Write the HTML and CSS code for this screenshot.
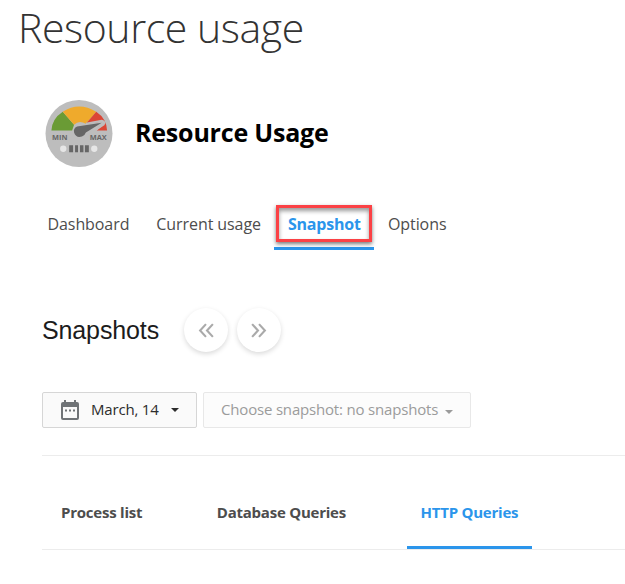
FILE: index.html
```html
<!DOCTYPE html>
<html lang="en">
<head>
<meta charset="utf-8">
<title>Resource usage</title>
<link rel="stylesheet" href="styles.css">
</head>
<body>
<h1 class="page-title">Resource usage</h1>
<main class="content">
  <header class="plugin-header">
    <svg class="gauge" viewBox="0 0 68 68">
      <circle cx="34" cy="34" r="34" fill="#bdbdbd"/>
      <path d="M6 31A28.500 25 0 0 1 17.500 12L29 25Q28 28 27 31Z" fill="#6a9b35"/>
      <path d="M17.500 12Q34 1 51.500 12L41 24Q34 20 29 25Z" fill="#efaa2c"/>
      <path d="M51.500 12Q62 19 62.500 31H52L60 24Q60 20 56 22L41 24Z" fill="#db4635"/>
      <path d="M41 24L57 21Q61 22 59 25L50 31" fill="none" stroke="#bdbdbd" stroke-width="2"/>
      <path d="M57 23.200L32 27Q28 29 29 33Q31 39 37 37Q40 36 41 33Z" fill="#666"/>
      <text class="gauge-label" x="14.500" y="41">MIN</text>
      <text class="gauge-label" x="53.500" y="41">MAX</text>
      <circle cx="18" cy="49.500" r="3.200" fill="#e6e6e6"/>
      <circle cx="49.500" cy="49.500" r="3.200" fill="#e6e6e6"/>
      <path d="M24 46h4v7h-4zM30 46h3v7h-3zM35 46h3.500v7H35zM40 46h4v7h-4z" fill="#666"/>
    </svg>
    <h2 class="plugin-name">Resource Usage</h2>
  </header>
  <nav class="tabs">
    <a class="tab">Dashboard</a>
    <a class="tab">Current usage</a>
    <a class="tab active">Snapshot<span class="highlight"></span></a>
    <a class="tab">Options</a>
  </nav>
  <section class="snapshots">
    <h3 class="section-title">Snapshots</h3>
    <button class="round"><svg viewBox="0 0 16 16"><path d="M7.500 2L2 8l5.500 6M14 2L8.500 8l5.500 6"/></svg></button>
    <button class="round"><svg viewBox="0 0 16 16"><path d="M2 2l5.500 6L2 14M8.500 2L14 8l-5.500 6"/></svg></button>
  </section>
  <div class="filters">
    <button class="select date"><svg class="calendar" viewBox="0 0 18 20"><path fill-rule="evenodd" d="M2 2h1V0h2v2h8V0h2v2h1q2 0 2 2v14q0 2-2 2H2q-2 0-2-2V4q0-2 2-2zM2 7v11h14V7z"/><path d="M4 9.500h2v2H4zM8 9.500h2v2H8zM12 9.500h2v2h-2z"/></svg><span class="date-text">March, 14</span><i class="caret"></i></button>
    <button class="select choose"><span class="choose-text">Choose snapshot: no snapshots</span><i class="caret"></i></button>
  </div>
  <nav class="subtabs">
    <a class="subtab">Process list</a>
    <a class="subtab">Database Queries</a>
    <a class="subtab active">HTTP Queries</a>
  </nav>
</main>
</body>
</html>
```
FILE: styles.css
```css
* { box-sizing: border-box; }
body { margin: 0; background: #fff; color: #4d4d4d; font-family: "Open Sans", sans-serif; overflow: hidden; }
h1, h2, h3 { margin: 0; }
button { padding: 0; font: inherit; }
.page-title { padding-left: 18px; height: 99px; font-size: 41px; line-height: 55px; letter-spacing: -.42px; font-weight: 300; color: #333; white-space: nowrap; }
.content { padding-left: 42px; }
.plugin-header { display: flex; align-items: center; height: 69px; padding-left: 3px; gap: 22px; }
.gauge { width: 68px; height: 67px; margin-bottom: 1px; }
.gauge-label { font: bold 7.500px "Open Sans", sans-serif; fill: #666; text-anchor: middle; }
.plugin-name { margin-bottom: 4px; font-size: 25px; line-height: 34px; letter-spacing: -.2px; font-weight: 700; color: #000; }
.tabs { display: flex; margin: 31px 0 0 -8px; height: 51px; font-size: 16px; line-height: 50px; letter-spacing: -.08px; }
.tab { position: relative; padding: 0 13.500px; white-space: nowrap; }
.tab.active { width: 100px; font-weight: 700; letter-spacing: -.22px; color: #2b95eb; border-bottom: 3px solid #2b95eb; }
.highlight { position: absolute; left: 2px; top: 6px; width: 96px; height: 37px; border: 3px solid #fb4145; box-shadow: 0 2px 4px #0008, inset 0 3px 4px #0006; }
.snapshots { display: flex; align-items: center; height: 44px; margin-top: 58px; }
.section-title { width: 142px; font: 25px "Liberation Sans", sans-serif; letter-spacing: -.12px; color: #1c1c1c; }
.round { display: flex; align-items: center; justify-content: center; width: 44px; height: 44px; margin-right: 8.500px; border: 0; border-radius: 50%; background: #fff; box-shadow: 0 2px 5px #00000026; }
.round svg { width: 17px; height: 17px; fill: none; stroke: #aaa; stroke-width: 2; }
.filters { display: flex; gap: 6px; margin-top: 40px; }
.select { display: flex; align-items: center; height: 36px; border: 1px solid #d6d6d6; border-radius: 2px; background: #fafafa; font-size: 15px; letter-spacing: -.18px; white-space: nowrap; }
.date { width: 155px; padding-left: 18px; color: #2c2c2c; }
.calendar { width: 18px; height: 20px; margin-bottom: 1px; fill: #707477; }
.date-text { width: 80px; margin: 0 0 2px 12px; text-align: left; }
.caret { border: 4.500px solid transparent; border-top-color: currentColor; border-bottom: 0; }
.choose { width: 268px; padding-left: 17px; border-color: #e8e8e8; background: #fcfcfc; color: #9b9b9b; }
.choose-text { width: 224px; margin-bottom: 2px; text-align: left; }
.choose .caret { margin-top: 4px; }
.subtabs { display: flex; height: 95px; margin-top: 27px; border-top: 1px solid #ececec; border-bottom: 1px solid #ececec; padding-left: 5.500px; gap: 47.500px; font-size: 15px; line-height: 112px; letter-spacing: -.23px; font-weight: 700; }
.subtab { padding: 0 13.500px; white-space: nowrap; }
.subtab.active { color: #2b95eb; border-bottom: 3px solid #2b95eb; }
```
